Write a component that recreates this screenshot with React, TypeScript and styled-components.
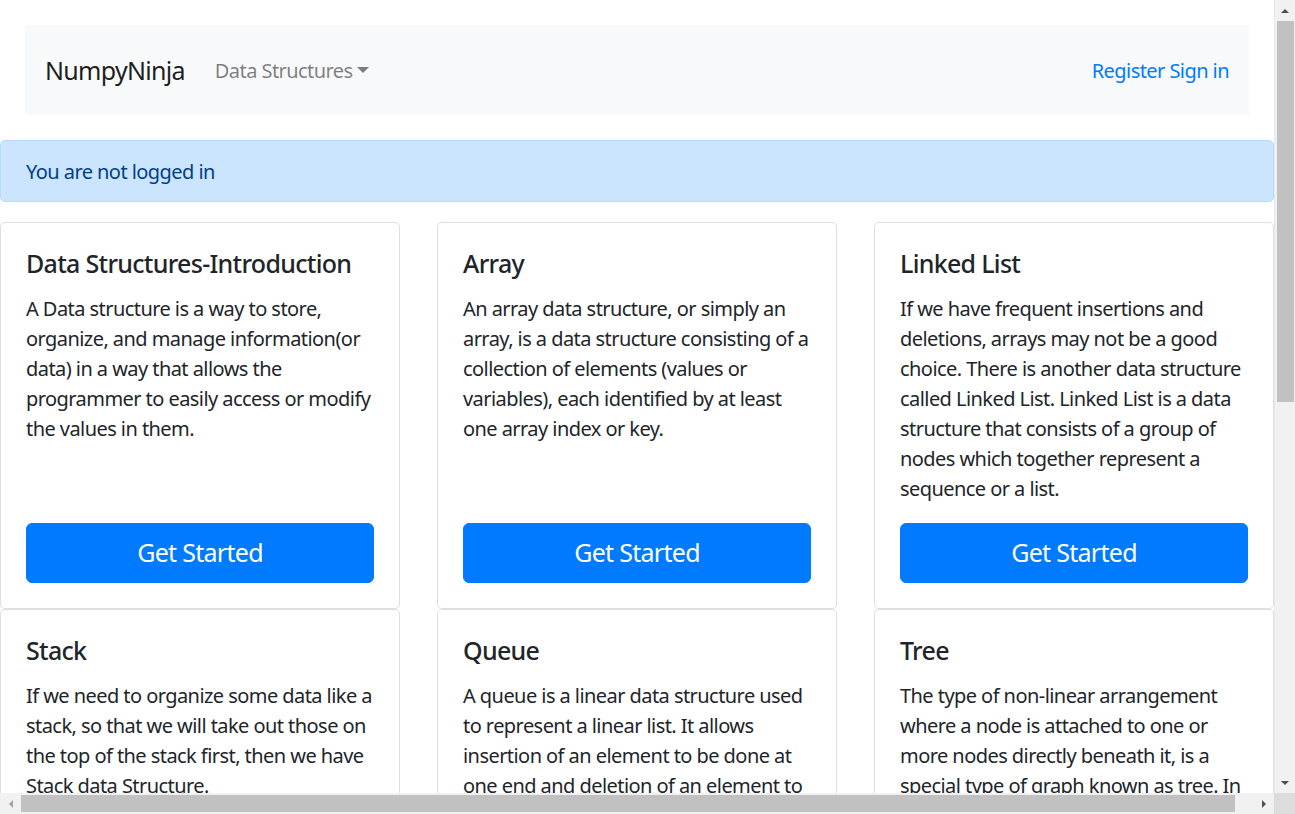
import React from "react";
import styled, { createGlobalStyle } from "styled-components";

const GlobalStyle = createGlobalStyle`
  html, body { margin: 0; padding: 0; overflow: hidden; }
  body {
    font-family: "Noto Sans", "Open Sans", "Liberation Sans", sans-serif;
    font-size: 20px;
    line-height: 1.5;
    letter-spacing: -0.56px;
    color: #212529;
    background: #fff;
  }
  *, *::before, *::after { box-sizing: border-box; }
`;

const Frame = styled.div`
  display: grid;
  grid-template-columns: 1fr 21px;
  grid-template-rows: 1fr 21px;
  width: 100vw;
  height: 100vh;
`;

const Viewport = styled.div`
  overflow: hidden;
  min-width: 0;
  min-height: 0;
`;

const Navbar = styled.nav`
  margin: 25px;
  height: 90px;
  padding: 0 20px;
  background: #f8f9fa;
  display: flex;
  align-items: center;
`;

const Brand = styled.a`
  font-size: 25px;
  letter-spacing: -0.7px;
  color: rgba(0, 0, 0, 0.9);
  margin-right: 20px;
  text-decoration: none;
  padding-top: 2px;
`;

const NavLink = styled.a<{ $primary?: boolean; $end?: boolean }>`
  font-size: 20px;
  color: ${(p) => (p.$primary ? "#007bff" : "rgba(0, 0, 0, 0.5)")};
  text-decoration: none;
  padding: 12px ${(p) => (p.$end ? "0" : "10px")} 10px 10px;
  display: inline-flex;
  align-items: center;
`;

const Caret = styled.span`
  display: inline-block;
  margin-left: 4px;
  width: 0;
  height: 0;
  border-top: 6px solid rgba(0, 0, 0, 0.5);
  border-left: 6px solid transparent;
  border-right: 6px solid transparent;
  transform: translateY(-1px);
`;

const NavRight = styled.div`
  margin-left: auto;
  display: flex;
`;

const Alert = styled.div`
  margin: 0 0 20px;
  padding: 16px 25px 14px;
  background: #cce5ff;
  border: 1px solid #b8daff;
  border-radius: 5px;
  color: #004085;
`;

const CardGrid = styled.div`
  display: grid;
  grid-template-columns: repeat(3, 400px);
  column-gap: 37px;
`;

const Card = styled.div`
  display: flex;
  flex-direction: column;
  border: 1px solid rgba(0, 0, 0, 0.125);
  border-radius: 5px;
  background: #fff;
`;

const CardBody = styled.div`
  flex: 1;
  display: flex;
  flex-direction: column;
  padding: 25px;
`;

const CardTitle = styled.h5`
  margin: 0 0 15px;
  font-size: 25px;
  letter-spacing: -0.7px;
  font-weight: 500;
  line-height: 1.2;
`;

const CardText = styled.p`
  margin: 0 0 19px;
  padding-top: 1px;
`;

const Button = styled.a`
  margin-top: auto;
  display: block;
  text-align: center;
  background: #007bff;
  border: 1px solid #007bff;
  color: #fff;
  font-size: 25px;
  letter-spacing: -0.7px;
  line-height: 1.5;
  padding: 10px 20px;
  border-radius: 6px;
  text-decoration: none;
`;

const VTrack = styled.div`
  background: #f1f1f1;
  border-left: 1px solid #e8e8e8;
  display: flex;
  flex-direction: column;
  align-items: center;
`;

const HTrack = styled.div`
  background: #f1f1f1;
  display: flex;
  align-items: center;
`;

const Corner = styled.div`
  background: #dcdcdc;
`;

const ArrowBtn = styled.div`
  width: 21px;
  height: 21px;
  flex: none;
  display: flex;
  align-items: center;
  justify-content: center;
`;

const Spacer = styled.div`
  flex: 1;
`;

const VThumb = styled.div`
  width: 17px;
  height: 381px;
  background: #c1c1c1;
`;

const HThumb = styled.div`
  height: 17px;
  width: 1214px;
  background: #c1c1c1;
`;

const Tri = ({ dir }: { dir: "up" | "down" | "left" | "right" }) => {
  const pts = {
    up: "1,7 5,3 9,7",
    down: "1,3 5,7 9,3",
    left: "7,1 3,5 7,9",
    right: "3,1 7,5 3,9",
  }[dir];
  return (
    <svg width="10" height="10" viewBox="0 0 10 10">
      <polygon points={pts} fill={dir === "left" ? "#a3a3a3" : "#505050"} />
    </svg>
  );
};

const cards = [
  {
    title: "Data Structures-Introduction",
    text: "A Data structure is a way to store, organize, and manage information(or data) in a way that allows the programmer to easily access or modify the values in them.",
  },
  {
    title: "Array",
    text: "An array data structure, or simply an array, is a data structure consisting of a collection of elements (values or variables), each identified by at least one array index or key.",
  },
  {
    title: "Linked List",
    text: "If we have frequent insertions and deletions, arrays may not be a good choice. There is another data structure called Linked List. Linked List is a data structure that consists of a group of nodes which together represent a sequence or a list.",
  },
  {
    title: "Stack",
    text: "If we need to organize some data like a stack, so that we will take out those on the top of the stack first, then we have Stack data Structure.",
  },
  {
    title: "Queue",
    text: "A queue is a linear data structure used to represent a linear list. It allows insertion of an element to be done at one end and deletion of an element to be performed at the other end.",
  },
  {
    title: "Tree",
    text: "The type of non-linear arrangement where a node is attached to one or more nodes directly beneath it, is a special type of graph known as tree. In a tree there is one root node.",
  },
];

export default function App() {
  return (
    <>
      <GlobalStyle />
      <Frame>
        <Viewport>
          <Navbar>
            <Brand href="#">NumpyNinja</Brand>
            <NavLink href="#">
              Data Structures
              <Caret />
            </NavLink>
            <NavRight>
              <NavLink $primary $end href="#">
                Register Sign in
              </NavLink>
            </NavRight>
          </Navbar>
          <Alert>You are not logged in</Alert>
          <CardGrid>
            {cards.map((c) => (
              <Card key={c.title}>
                <CardBody>
                  <CardTitle>{c.title}</CardTitle>
                  <CardText>{c.text}</CardText>
                  <Button href="#">Get Started</Button>
                </CardBody>
              </Card>
            ))}
          </CardGrid>
        </Viewport>
        <VTrack>
          <ArrowBtn>
            <Tri dir="up" />
          </ArrowBtn>
          <VThumb />
          <Spacer />
          <ArrowBtn>
            <Tri dir="down" />
          </ArrowBtn>
        </VTrack>
        <HTrack>
          <ArrowBtn>
            <Tri dir="left" />
          </ArrowBtn>
          <HThumb />
          <Spacer />
          <ArrowBtn>
            <Tri dir="right" />
          </ArrowBtn>
        </HTrack>
        <Corner />
      </Frame>
    </>
  );
}
